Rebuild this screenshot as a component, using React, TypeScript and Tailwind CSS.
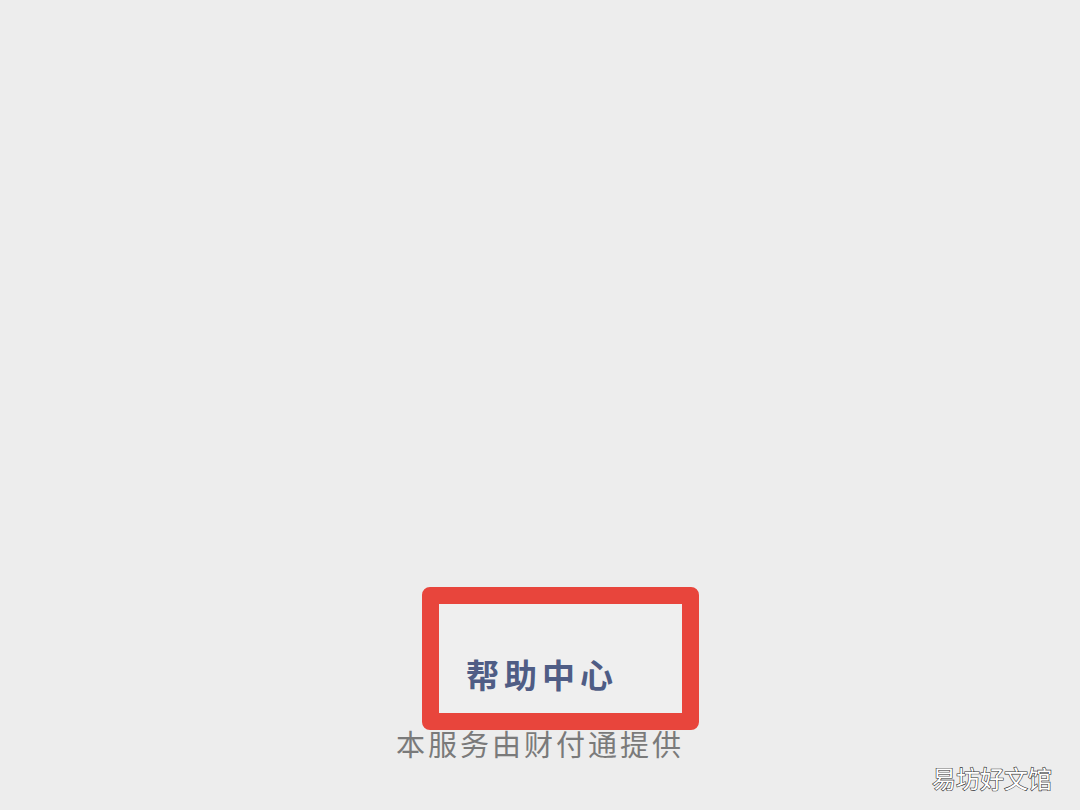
export default function App() {
  return (
    <div className="relative flex h-[810px] w-full flex-col items-center bg-[#ededed] pt-[587px] font-['Noto_Sans_CJK_SC',sans-serif]">
      <div className="ml-[41px] flex h-[143px] w-[277px] items-end rounded-[8px] border-[17px] border-[#e8453c] bg-[#efefef] pb-[19px] pl-[27px]">
        <span className="text-[33px] font-bold leading-[40px] tracking-[5px] text-[#4f5d85]">帮助中心</span>
      </div>
      <p className="mt-[-3px] text-[29px] leading-[32px] tracking-[3px] text-[#7a7a7a]">本服务由财付通提供</p>
      <span className="absolute bottom-[18px] right-[28px] text-[24px] leading-[28px] text-white [-webkit-text-stroke:1.2px_#333] [paint-order:stroke_fill]">
        易坊好文馆
      </span>
    </div>
  );
}
